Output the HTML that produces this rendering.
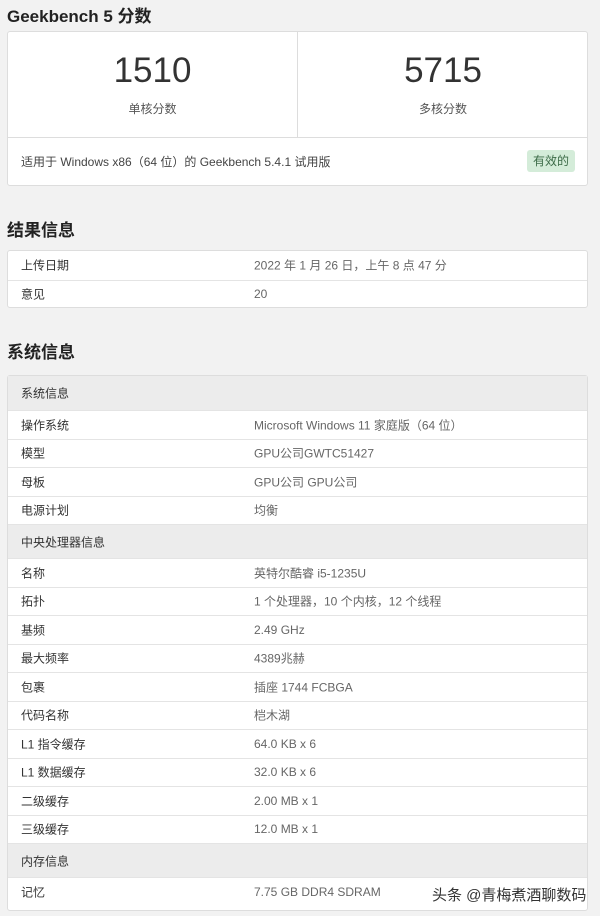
<!DOCTYPE html>
<html><head><meta charset="utf-8"><style>
body{margin:0;background:#f2f2f2;font-family:"Liberation Sans","Noto Sans CJK SC",sans-serif;color:#333;width:600px;height:916px;overflow:hidden;position:relative}
h2{position:absolute;left:7px;margin:0;font-size:17px;font-weight:bold;color:#222}
.card{position:absolute;left:7px;width:581px;background:#fff;border:1px solid #ddd;border-radius:3px;box-sizing:border-box}
.row{position:relative;height:28.5px;border-top:1px solid #e4e4e4;box-sizing:border-box;font-size:12px}
.row:first-child{border-top:none}
.row span{position:absolute;top:50%;transform:translateY(-50%)}
.l{left:13px;color:#333}.v{left:246px;color:#666}
.hd{height:34px;background:#ececec}
</style></head><body>
<h2 style="top:2px">Geekbench 5 分数</h2>
<div class="card" style="top:31px;height:155px">
 <div style="position:absolute;left:289px;top:0;height:105px;border-left:1px solid #ddd"></div>
 <div style="position:absolute;left:0;right:0;top:105px;border-top:1px solid #ddd"></div>
 <div style="position:absolute;left:0;width:289px;top:19px;text-align:center;font-size:35px;color:#333">1510</div>
 <div style="position:absolute;left:0;width:289px;top:68px;text-align:center;font-size:12px;color:#555">单核分数</div>
 <div style="position:absolute;left:290px;width:290px;top:19px;text-align:center;font-size:35px;color:#333">5715</div>
 <div style="position:absolute;left:290px;width:290px;top:68px;text-align:center;font-size:12px;color:#555">多核分数</div>
 <div style="position:absolute;left:13px;top:121px;font-size:12px;color:#444">适用于 Windows x86（64 位）的 Geekbench 5.4.1 试用版</div>
 <div style="position:absolute;left:519px;top:118px;width:48px;height:22px;line-height:22px;text-align:center;background:#d4ecd9;color:#3c6b47;border-radius:3px;font-size:12px">有效的</div>
</div>
<h2 style="top:216px">结果信息</h2>
<div class="card" style="top:250px;height:58px">
 <div class="row"><span class="l">上传日期</span><span class="v">2022 年 1 月 26 日，上午 8 点 47 分</span></div>
 <div class="row"><span class="l">意见</span><span class="v">20</span></div>
</div>
<h2 style="top:338px">系统信息</h2>
<div class="card" style="top:375px;height:536px">
 <div class="row hd"><span class="l">系统信息</span></div>
 <div class="row"><span class="l">操作系统</span><span class="v">Microsoft Windows 11 家庭版（64 位）</span></div>
 <div class="row"><span class="l">模型</span><span class="v">GPU公司GWTC51427</span></div>
 <div class="row"><span class="l">母板</span><span class="v">GPU公司 GPU公司</span></div>
 <div class="row"><span class="l">电源计划</span><span class="v">均衡</span></div>
 <div class="row hd"><span class="l">中央处理器信息</span></div>
 <div class="row"><span class="l">名称</span><span class="v">英特尔酷睿 i5-1235U</span></div>
 <div class="row"><span class="l">拓扑</span><span class="v">1 个处理器，10 个内核，12 个线程</span></div>
 <div class="row"><span class="l">基频</span><span class="v">2.49 GHz</span></div>
 <div class="row"><span class="l">最大频率</span><span class="v">4389兆赫</span></div>
 <div class="row"><span class="l">包裹</span><span class="v">插座 1744 FCBGA</span></div>
 <div class="row"><span class="l">代码名称</span><span class="v">桤木湖</span></div>
 <div class="row"><span class="l">L1 指令缓存</span><span class="v">64.0 KB x 6</span></div>
 <div class="row"><span class="l">L1 数据缓存</span><span class="v">32.0 KB x 6</span></div>
 <div class="row"><span class="l">二级缓存</span><span class="v">2.00 MB x 1</span></div>
 <div class="row"><span class="l">三级缓存</span><span class="v">12.0 MB x 1</span></div>
 <div class="row hd"><span class="l">内存信息</span></div>
 <div class="row"><span class="l">记忆</span><span class="v">7.75 GB DDR4 SDRAM</span></div>
</div>
<div style="position:absolute;left:432px;top:884px;font-size:15px;color:#333">头条 @青梅煮酒聊数码</div>
</body></html>
